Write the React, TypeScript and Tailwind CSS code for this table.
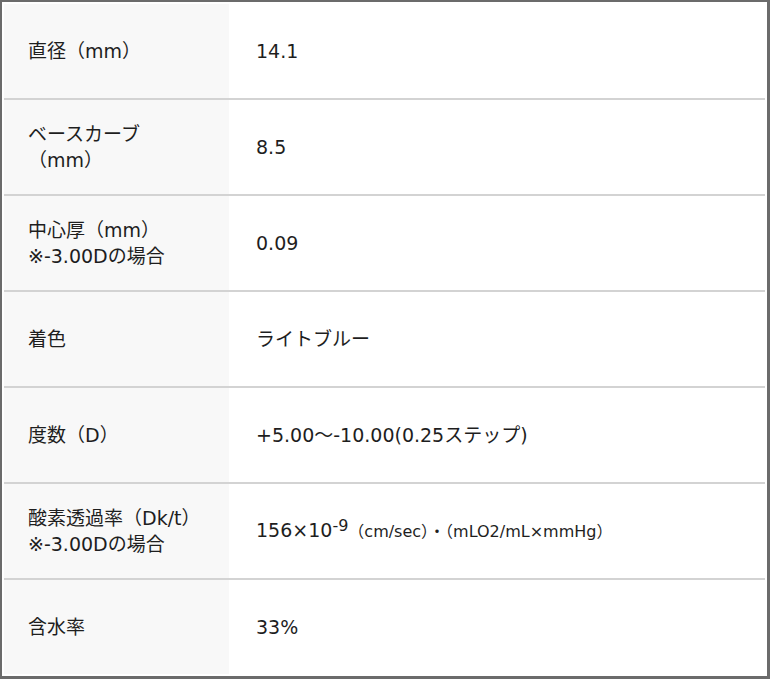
const font = {
  fontFamily: '"DejaVu Sans", "Noto Sans CJK JP", sans-serif',
};

type Row = { label: React.ReactNode; value: React.ReactNode };

const rows: Row[] = [
  { label: "直径（mm）", value: "14.1" },
  {
    label: (
      <>
        ベースカーブ
        <br />
        （mm）
      </>
    ),
    value: "8.5",
  },
  {
    label: (
      <>
        中心厚（mm）
        <br />
        ※-3.00Dの場合
      </>
    ),
    value: "0.09",
  },
  { label: "着色", value: "ライトブルー" },
  { label: "度数（D）", value: "+5.00～-10.00(0.25ステップ)" },
  {
    label: (
      <>
        酸素透過率（Dk/t）
        <br />
        ※-3.00Dの場合
      </>
    ),
    value: (
      <>
        156×10
        <span className="relative -top-[6px] text-[16px]">-9</span>
        <span className="text-[16px]">（cm/sec）・（mLO2/mL×mmHg）</span>
      </>
    ),
  },
  { label: "含水率", value: "33%" },
];

export default function App() {
  return (
    <div
      className="h-[679px] w-[770px] border-t-2 border-l-2 border-r-[3px] border-b-[3px] border-[#6b6b6b] bg-white p-[2px] text-[19px] text-[#1e1e1e]"
      style={font}
    >
      <div className="flex h-full flex-col">
        {rows.map((r, i) => (
          <div
            key={i}
            className={`flex flex-1 ${i < rows.length - 1 ? "border-b-2 border-[#d3d3d3]" : ""}`}
          >
            <div className="flex w-[225px] items-center bg-[#f8f8f8] pl-[24px] leading-[26px]">
              <div>{r.label}</div>
            </div>
            <div className="flex flex-1 items-center pl-[27px] leading-[26px]">
              <div>{r.value}</div>
            </div>
          </div>
        ))}
      </div>
    </div>
  );
}
